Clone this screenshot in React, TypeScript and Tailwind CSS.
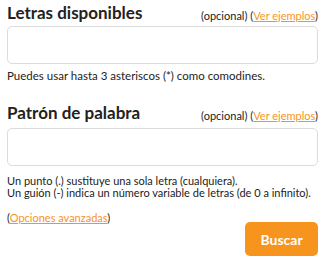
export default function App() {
  return (
    <div className="w-[325px] h-[262px] bg-white px-[7px] pt-[2px] text-[#222] font-['Lato',sans-serif]">
      <div className="flex items-end justify-between">
        <h2 className="text-[17px] font-bold leading-[22px]">Letras disponibles</h2>
        <span className="text-[11px] leading-[16px]">
          (opcional) (<a href="#" className="text-[#f7941d] underline">Ver ejemplos</a>)
        </span>
      </div>
      <input className="block mt-[2px] w-full h-[38px] rounded-[5px] border border-[#dcdcdc] bg-white" />
      <p className="mt-[6px] text-[11.5px] leading-[12px]">Puedes usar hasta 3 asteriscos (*) como comodines.</p>

      <div className="mt-[20px] flex items-end justify-between">
        <h2 className="text-[17px] font-bold leading-[22px]">Patrón de palabra</h2>
        <span className="text-[11px] leading-[16px]">
          (opcional) (<a href="#" className="text-[#f7941d] underline">Ver ejemplos</a>)
        </span>
      </div>
      <input className="block mt-[4px] w-full h-[38px] rounded-[5px] border border-[#dcdcdc] bg-white" />
      <p className="mt-[9px] text-[11px] leading-[12px] whitespace-nowrap">
        Un punto (.) sustituye una sola letra (cualquiera).
        <br />
        Un guión (-) indica un número variable de letras (de 0 a infinito).
      </p>

      <p className="mt-[13px] text-[11px] leading-[12px]">
        (<a href="#" className="text-[#f7941d] underline">Opciones avanzadas</a>)
      </p>
      <div className="flex justify-end mt-[-2px]">
        <button className="w-[73px] h-[34px] rounded-[5px] bg-[#f7941d] text-white text-[14px] font-bold">Buscar</button>
      </div>
    </div>
  );
}
